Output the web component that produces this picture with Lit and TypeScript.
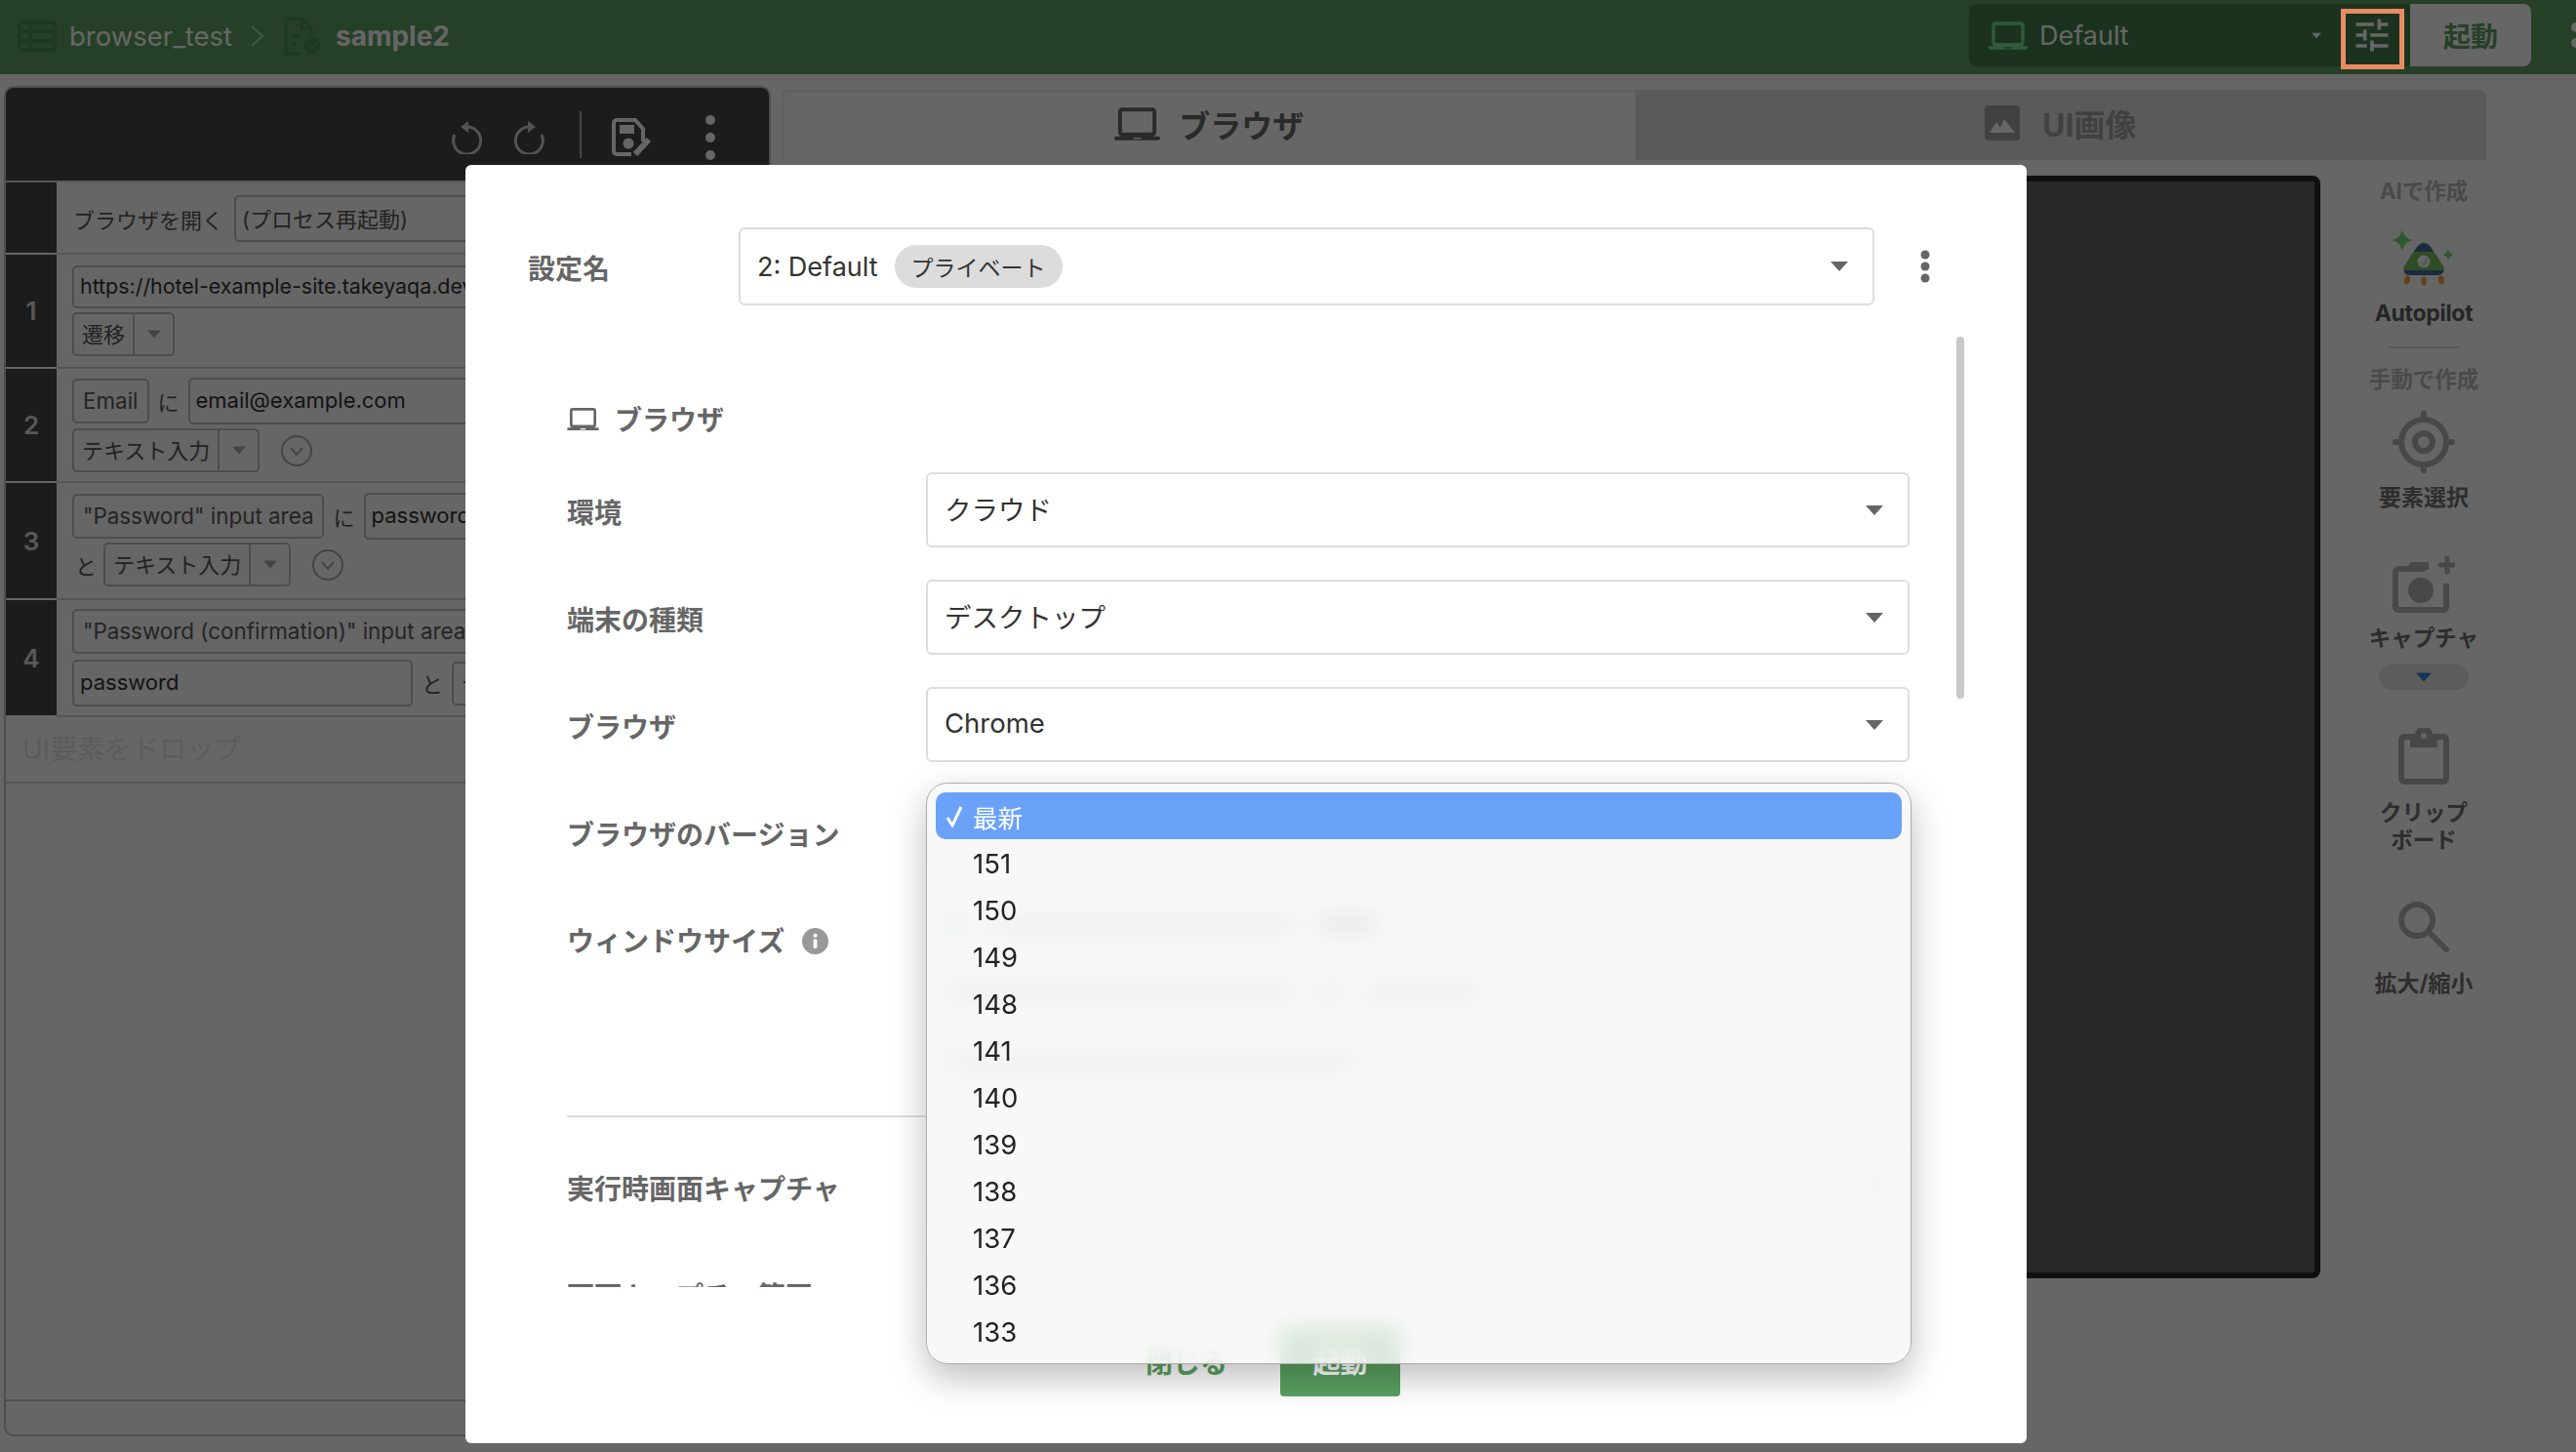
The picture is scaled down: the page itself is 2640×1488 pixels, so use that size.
import { LitElement, html, css, svg } from 'lit';
import { customElement } from 'lit/decorators.js';

const laptop = (cls: string) => html`<svg class=${cls} viewBox="0 3 24 17"><path fill-rule="evenodd" d="M4 3h16c1.1 0 2 .9 2 2v11c0 1.1-.9 2-2 2h3c.6 0 1 .4 1 1s-.4 1-1 1H1c-.6 0-1-.4-1-1s.4-1 1-1h3c-1.1 0-2-.9-2-2V5c0-1.1.9-2 2-2zm0 2v11h16V5H4zm6 13.6v.8h4v-.8h-4z"/></svg>`;

const caret = (cls: string) => html`<svg class=${cls} viewBox="0 0 18 10"><path d="M0 0h18L9 10z"/></svg>`;

const downCircle = html`<svg class="down-circle" viewBox="0 0 32 32"><circle cx="16" cy="16" r="15"/><path d="M10 13l6 7 6-7"/></svg>`;

const VERSIONS = ['151', '150', '149', '148', '141', '140', '139', '138', '137', '136', '133'];

@customElement('app-root')
export class AppRoot extends LitElement {
  static styles = css`
    :host {
      display: block;
      position: relative;
      width: 2640px;
      height: 1488px;
      overflow: hidden;
      background: #fff;
      color: #333;
      font-family: Inter, "Noto Sans CJK JP", sans-serif;
    }
    svg { display: block; flex: none; }

    /* top bar */
    .topbar {
      display: flex;
      height: 76px;
      background: #5fa062;
      overflow: hidden;
    }
    .crumbs {
      display: flex;
      align-items: center;
      flex: 1;
      padding: 0 0 2px 18px;
      color: #fff;
      font-size: 27.5px;
    }
    .crumb-icon { width: 40px; height: 32px; margin-right: 13px; }
    .chevron { width: 15px; height: 22px; margin: 0 20px 0 18px; }
    .file-icon { width: 39px; height: 40px; margin-right: 14px; }
    .crumbs b { font-size: 28px; font-weight: 700; }
    .env {
      display: flex;
      width: 452px;
      height: 64px;
      margin-top: 4px;
      background: #447f4b;
      border-radius: 8px 0 0 8px;
    }
    .env-select {
      display: flex;
      align-items: center;
      width: 381px;
      box-sizing: border-box;
      padding: 0 20px;
      color: #fff;
      font-size: 27px;
    }
    .env-laptop { width: 40px; height: 29px; fill: #80df91; margin-right: 12px; }
    .env-caret { width: 10px; height: 7px; fill: #fff; margin-left: auto; }
    .env-tune {
      display: flex;
      align-items: center;
      justify-content: center;
      flex: 1;
      padding-right: 8px;
    }
    .env-tune svg { width: 44px; height: 44px; fill: #fff; }
    .run {
      display: flex;
      align-items: center;
      justify-content: center;
      width: 124px;
      height: 64px;
      margin-top: 4px;
      border-radius: 0 8px 8px 0;
      background: #fff;
      color: #5fa062;
      font-size: 28px;
      font-weight: 700;
    }
    .bar-more { width: 6px; height: 76px; margin-left: 40px; fill: #fff; }

    /* page body */
    .main { display: flex; height: 1412px; }

    /* steps panel */
    .steps {
      display: flex;
      flex-direction: column;
      width: 786px;
      height: 1384px;
      margin: 12px 0 0 4px;
      box-sizing: border-box;
      border: 2px solid #c4c4c4;
      border-radius: 10px;
      overflow: hidden;
      font-size: 22px;
    }
    .steps-head {
      display: flex;
      flex: none;
      align-items: center;
      justify-content: flex-end;
      height: 95px;
      padding-right: 54px;
      background: #464646;
      border-bottom: 2px solid #ddd;
    }
    .hist { width: 34px; height: 36px; fill: none; stroke: #d0d0d0; stroke-width: 3; margin-top: 4px; }
    .hist path + path { fill: #d0d0d0; stroke: none; }
    .hist.redo { margin-left: 29px; }
    .head-sep { width: 2px; height: 48px; background: #aaa; margin: 0 31px 0 35px; }
    .save { width: 41px; height: 39px; margin-top: 6px; }
    .head-more { width: 12px; height: 48px; fill: #fff; margin: 6px 0 0 54px; }
    .step { display: grid; grid-template-columns: 52px 1fr; flex: none; }
    .num {
      display: flex;
      align-items: center;
      justify-content: center;
      background: #464646;
      border-bottom: 2px solid #fff;
      color: #ddd;
      font-size: 26px;
      font-weight: 600;
    }
    .body {
      display: flex;
      flex-direction: column;
      min-width: 0;
      padding-left: 16px;
      border-bottom: 2px solid #d4d4d4;
    }
    .s0 { height: 74px; }
    .s0 .body { padding-top: 13px; }
    .s1 { height: 117px; }
    .s1 .body { padding-top: 11px; gap: 4px; }
    .s2 { height: 117px; }
    .s2 .body { padding-top: 9px; gap: 4px; }
    .s3 { height: 120px; }
    .s3 .body { padding-top: 10px; gap: 3px; }
    .s4 { height: 120px; }
    .s4 .body { padding-top: 9px; gap: 6px; }
    .line { display: flex; align-items: center; white-space: nowrap; }
    .word { color: #555; margin: 0 9px; }
    .word.first { margin: 0 11px 0 1px; }
    .word.lead { margin: 0 7px 0 3px; }
    .chip {
      display: flex;
      align-items: center;
      flex: none;
      height: 46px;
      box-sizing: border-box;
      padding: 0 9px 2px;
      border: 2px solid #c0c0c0;
      border-radius: 5px;
      color: #5a5a5a;
      font-size: 22.4px;
    }
    .input {
      display: flex;
      align-items: center;
      flex: 1;
      min-width: 0;
      height: 48px;
      box-sizing: border-box;
      padding: 0 6px 2px;
      border: 2px solid #c0c0c0;
      border-radius: 5px;
      color: #333;
      overflow: hidden;
    }
    .input.muted { color: #555; }
    .input.fixed { flex: none; width: 349px; }
    .input.url { height: 44px; font-size: 21.4px; }
    .combo {
      display: flex;
      align-items: center;
      flex: none;
      height: 45px;
      box-sizing: border-box;
      border: 2px solid #c0c0c0;
      border-radius: 5px;
      color: #555;
    }
    .combo span { padding: 0 8px 3px; font-size: 22px; }
    .combo i {
      display: flex;
      align-items: center;
      justify-content: center;
      width: 39px;
      height: 100%;
      border-left: 2px solid #c0c0c0;
    }
    .combo-caret { width: 14px; height: 9px; fill: #aaa; }
    .down-circle { width: 32px; height: 32px; margin-left: 22px; fill: none; stroke: #aaa; stroke-width: 2; }
    .drop {
      flex: none;
      height: 68px;
      box-sizing: border-box;
      padding-left: 17px;
      border-bottom: 2px solid #d4d4d4;
      color: #e6e6e6;
      font-size: 28px;
      line-height: 66px;
    }
    .steps-space { flex: 1; border-bottom: 2px solid #c8c8c8; }
    .steps-foot { flex: none; height: 34px; }

    /* browser area */
    .stage { display: flex; flex-direction: column; width: 1747px; margin: 16px 0 0 11px; }
    .tabs { display: flex; height: 72px; flex: none; }
    .tab {
      display: flex;
      align-items: center;
      justify-content: center;
      flex: 1;
      gap: 19px;
      box-sizing: border-box;
      padding-bottom: 4px;
      font-size: 32px;
      font-weight: 700;
    }
    .tab.on { color: #6a6a6a; border-top: 2px solid #eee; border-left: 2px solid #eee; border-radius: 8px 0 0 0; }
    .tab.off { color: #a2a2a2; background: #e1e1e1; border-radius: 0 8px 0 0; gap: 23px; }
    .tab-laptop { width: 47px; height: 34px; fill: #6a6a6a; }
    .tab-image { width: 36px; height: 36px; }
    .work { display: flex; flex: 1; }
    .device {
      flex: 1;
      height: 1130px;
      margin: 16px 42px 0 60px;
      box-sizing: border-box;
      background: #666;
      border: 6px solid #2a2a2a;
      border-radius: 8px;
    }
    .tools {
      display: flex;
      flex-direction: column;
      align-items: center;
      width: 128px;
      padding-top: 16px;
      color: #707070;
      font-size: 23px;
      font-weight: 700;
      line-height: 32px;
      text-align: center;
      white-space: nowrap;
    }
    .tools .head { color: #b9b9b9; font-size: 22.5px; }
    .tools .auto { color: #5d5d5d; font-size: 23px; letter-spacing: -0.3px; margin-top: 12px; }
    .tools hr { width: 73px; height: 2px; margin: 18px 0 0; border: 0; background: #dcdcdc; }
    .mt16 { margin-top: 16px; }
    .rocket { width: 66px; height: 58px; margin-top: 23px; }
    .target { width: 64px; height: 64px; margin-top: 16px; fill: none; stroke: #b4b4b4; stroke-width: 6; }
    .lab-target { margin-top: 9px; }
    .camera { width: 64px; height: 58px; margin-top: 44px; }
    .lab-camera { margin-top: 10px; font-size: 22.5px; }
    .more-pill {
      display: flex;
      align-items: center;
      justify-content: center;
      width: 92px;
      height: 26px;
      margin-top: 11px;
      border-radius: 13px;
      background: #e6e6e6;
    }
    .pill-caret { width: 16px; height: 10px; fill: #2a82e0; }
    .clip { width: 52px; height: 58px; margin-top: 39px; }
    .lab-clip { margin-top: 15px; font-size: 22.5px; line-height: 28px; }
    .zoom { width: 52px; height: 52px; margin-top: 49px; fill: none; stroke: #b4b4b4; stroke-width: 6; stroke-linecap: round; }

    /* dimmer and modal */
    .dim {
      position: absolute;
      inset: 0;
      display: flex;
      align-items: flex-start;
      justify-content: center;
      box-sizing: border-box;
      padding: 169px 86px 0 0;
      background: rgba(0, 0, 0, 0.6);
    }
    .marker {
      position: absolute;
      left: 2399px;
      top: 9px;
      width: 65px;
      height: 62px;
      box-sizing: border-box;
      border: 5px solid #e98b63;
    }
    .modal {
      position: relative;
      display: flex;
      flex-direction: column;
      width: 1600px;
      height: 1310px;
      background: #fff;
      border-radius: 6px;
    }
    .modal-head { display: flex; align-items: center; flex: none; height: 80px; margin: 64px 0 32px; padding-left: 64px; }
    .m-label { color: #666; font-size: 28px; font-weight: 700; white-space: nowrap; }
    .modal-head .m-label { width: 216px; padding-top: 2px; }
    .field {
      display: flex;
      align-items: center;
      box-sizing: border-box;
      padding: 0 25px 0 17px;
      border: 2px solid #ddd;
      border-radius: 6px;
      background: #fff;
      color: #333;
      font-size: 27.5px;
    }
    .field > .val { padding-bottom: 4px; }
    .field-caret { width: 18px; height: 10px; fill: #666; margin-left: auto; flex: none; }
    .setting { width: 1164px; height: 80px; font-size: 27px; }
    .setting .val { padding: 0; }
    .tag {
      display: flex;
      align-items: center;
      height: 44px;
      margin-left: 17px;
      padding: 0 17px;
      border-radius: 22px;
      background: #dcdcdc;
      font-size: 23px;
    }
    .kebab { width: 10px; height: 34px; margin-left: 47px; fill: #666; }
    .scroll {
      position: relative;
      flex: 1;
      min-height: 0;
      padding: 64px 120px 0 104px;
      overflow: hidden;
    }
    .scroll-thumb {
      position: absolute;
      left: 1528px;
      top: 0;
      width: 8px;
      height: 371px;
      border-radius: 4px;
      background: #c8c8c8;
    }
    .sec { display: flex; align-items: center; height: 40px; gap: 16px; margin-bottom: 35px; }
    .sec-laptop { width: 33px; height: 23px; fill: #666; }
    .row { display: flex; align-items: center; height: 77px; margin-bottom: 33px; }
    .row .m-label { width: 368px; flex: none; padding-top: 2px; }
    .row .field { flex: 1; height: 77px; }
    .win { align-items: flex-start; height: 219px; margin: 0; }
    .win .m-label { display: flex; align-items: center; gap: 18px; padding-top: 19px; }
    .info { width: 27px; height: 27px; fill: #999; margin-top: 2px; }
    .ghosts { display: flex; flex-direction: column; flex: 1; gap: 40px; padding: 8px 0 0 20px; }
    .ghost { display: flex; align-items: center; gap: 20px; height: 30px; }
    .ghost i { display: block; height: 22px; border-radius: 4px; background: #d4d4d4; }
    .ghost .dot { width: 22px; border-radius: 50%; background: #a8d8ac; }
    .ghost .dark { background: #b0b0b0; }
    .divider { height: 2px; margin-bottom: 32px; background: #ddd; }
    .modal-foot {
      display: flex;
      flex: none;
      align-items: center;
      justify-content: center;
      gap: 54px;
      height: 72px;
      padding: 40px 0 48px 55px;
      font-size: 28px;
      font-weight: 700;
    }
    .close { color: #5aa161; }
    .start {
      display: flex;
      align-items: center;
      justify-content: center;
      width: 123px;
      height: 72px;
      border-radius: 4px;
      background: #5aa161;
      color: #fff;
    }

    /* native select popup */
    .popup {
      position: absolute;
      left: 472px;
      top: 633px;
      width: 1010px;
      height: 596px;
      box-sizing: border-box;
      padding: 9px;
      border: 1px solid #aeaeae;
      border-radius: 22px;
      background: rgba(246, 246, 246, 0.82);
      backdrop-filter: blur(11px);
      box-shadow: 0 14px 36px rgba(0, 0, 0, 0.26);
      color: #222;
      font-size: 27.5px;
    }
    .opt {
      display: flex;
      align-items: center;
      height: 48px;
      box-sizing: border-box;
      padding: 2px 0 0 38px;
      border-radius: 10px;
    }
    .opt.sel { position: relative; padding-top: 0; background: #6aa1f9; color: #fff; font-size: 25.5px; }
    .check {
      position: absolute;
      left: 10px;
      top: 13px;
      width: 18px;
      height: 23px;
      fill: none;
      stroke: #fff;
      stroke-width: 3;
    }
  `;

  render() {
    return html`
      <div class="topbar">
        <div class="crumbs">
          ${this.tableIcon()}
          <span>browser_test</span>
          <svg class="chevron" viewBox="0 0 15 22"><path d="M2 1l11 10L2 21" fill="none" stroke="#96e196" stroke-width="2"/></svg>
          ${this.fileIcon()}
          <b>sample2</b>
        </div>
        <div class="env">
          <div class="env-select">
            ${laptop('env-laptop')}
            <span>Default</span>
            ${caret('env-caret')}
          </div>
          <div class="env-tune">
            <svg viewBox="0 0 24 24"><path d="M3 17v2h6v-2H3zM3 5v2h10V5H3zm10 16v-2h8v-2h-8v-2h-2v6h2zM7 9v2H3v2h4v2h2V9H7zm14 4v-2H11v2h10zm-6-4h2V7h4V5h-4V3h-2v6z"/></svg>
          </div>
        </div>
        <div class="run">起動</div>
        <svg class="bar-more" viewBox="0 0 6 76"><circle cx="6" cy="28" r="5"/><circle cx="6" cy="44" r="5"/></svg>
      </div>

      <div class="main">
        ${this.renderSteps()}
        <div class="stage">
          <div class="tabs">
            <div class="tab on">${laptop('tab-laptop')}<span>ブラウザ</span></div>
            <div class="tab off">
              <svg class="tab-image" viewBox="0 0 36 36"><rect width="36" height="36" rx="4" fill="#a2a2a2"/><path d="M5 28l7-11 4 6 4-9 11 14z" fill="#fff"/></svg>
              <span>UI画像</span>
            </div>
          </div>
          <div class="work">
            <div class="device"></div>
            ${this.renderTools()}
          </div>
        </div>
      </div>

      <div class="dim">${this.renderModal()}</div>
      <div class="marker"></div>
    `;
  }

  renderSteps() {
    return html`
      <div class="steps">
        <div class="steps-head">
          <svg class="hist" viewBox="0 0 34 36"><path d="M16 8A14 14 0 1 1 4 16"/><path d="M10 8l8-6v12z"/></svg>
          <svg class="hist redo" viewBox="0 0 34 36"><path d="M18 8A14 14 0 1 0 30 16"/><path d="M24 8l-8-6v12z"/></svg>
          <div class="head-sep"></div>
          <svg class="save" viewBox="0 0 41 39">
            <path d="M5 2h19l8 9v13M20 37H5a3 3 0 0 1-3-3V5a3 3 0 0 1 3-3" fill="none" stroke="#fff" stroke-width="4"/>
            <rect x="8" y="7" width="15" height="9" fill="#fff"/>
            <circle cx="17" cy="26" r="5.5" fill="#fff"/>
            <path d="M24 37l14-15" stroke="#fff" stroke-width="6"/>
          </svg>
          <svg class="head-more" viewBox="0 0 12 48"><circle cx="6" cy="6" r="5"/><circle cx="6" cy="24" r="5"/><circle cx="6" cy="42" r="5"/></svg>
        </div>

        <div class="step s0">
          <div class="num"></div>
          <div class="body">
            <div class="line"><span class="word first">ブラウザを開く</span><div class="input muted">(プロセス再起動)</div></div>
          </div>
        </div>
        <div class="step s1">
          <div class="num">1</div>
          <div class="body">
            <div class="line"><div class="input url">https://hotel-example-site.takeyaqa.dev/ja/signup.html</div></div>
            <div class="line">${this.combo('遷移')}</div>
          </div>
        </div>
        <div class="step s2">
          <div class="num">2</div>
          <div class="body">
            <div class="line"><div class="chip">Email</div><span class="word">に</span><div class="input">email@example.com</div></div>
            <div class="line">${this.combo('テキスト入力')}${downCircle}</div>
          </div>
        </div>
        <div class="step s3">
          <div class="num">3</div>
          <div class="body">
            <div class="line"><div class="chip">"Password" input area</div><span class="word">に</span><div class="input">password</div></div>
            <div class="line"><span class="word lead">と</span>${this.combo('テキスト入力')}${downCircle}</div>
          </div>
        </div>
        <div class="step s4">
          <div class="num">4</div>
          <div class="body">
            <div class="line"><div class="chip">"Password (confirmation)" input area</div></div>
            <div class="line"><div class="input fixed">password</div><span class="word">と</span>${this.combo('テキスト入力')}</div>
          </div>
        </div>
        <div class="drop">UI要素をドロップ</div>
        <div class="steps-space"></div>
        <div class="steps-foot"></div>
      </div>
    `;
  }

  combo(label: string) {
    return html`<div class="combo"><span>${label}</span><i>${caret('combo-caret')}</i></div>`;
  }

  renderTools() {
    return html`
      <div class="tools">
        <div class="head">AIで作成</div>
        ${this.rocketIcon()}
        <div class="auto">Autopilot</div>
        <hr />
        <div class="head mt16">手動で作成</div>
        <svg class="target" viewBox="0 0 64 64">
          <circle cx="32" cy="32" r="23"/><circle cx="32" cy="32" r="9"/>
          <path d="M32 3v6M32 55v6M3 32h6M55 32h6" stroke-linecap="round"/>
        </svg>
        <div class="lab-target">要素選択</div>
        <svg class="camera" viewBox="0 0 64 58">
          <path d="M33 13H6a3 3 0 0 0-3 3v36a3 3 0 0 0 3 3h46a3 3 0 0 0 3-3V28" fill="none" stroke="#b4b4b4" stroke-width="6"/>
          <path d="M14 14l3-6a3 3 0 0 1 3-2h17v8z" fill="#b4b4b4"/>
          <circle cx="29" cy="35" r="13" fill="#b4b4b4"/>
          <path d="M56 2v14M49 9h14" stroke="#b4b4b4" stroke-width="5" stroke-linecap="round"/>
        </svg>
        <div class="lab-camera">キャプチャ</div>
        <div class="more-pill">${caret('pill-caret')}</div>
        <svg class="clip" viewBox="0 0 52 58">
          <rect x="3" y="9" width="46" height="46" rx="3" fill="none" stroke="#b4b4b4" stroke-width="6"/>
          <path d="M12 7h5a9 9 0 0 1 18 0h5v13H12z" fill="#b4b4b4"/>
          <circle cx="26" cy="8" r="3" fill="#fff"/>
        </svg>
        <div class="lab-clip">クリップ<br />ボード</div>
        <svg class="zoom" viewBox="0 0 52 52"><circle cx="19" cy="19" r="16"/><path d="M31 31l18 18"/></svg>
        <div class="mt16">拡大/縮小</div>
      </div>
    `;
  }

  renderModal() {
    return html`
      <div class="modal">
        <div class="modal-head">
          <div class="m-label">設定名</div>
          <div class="field setting">
            <span class="val">2: Default</span>
            <span class="tag">プライベート</span>
            ${caret('field-caret')}
          </div>
          <svg class="kebab" viewBox="0 0 10 34"><ellipse cx="5" cy="5" rx="4.5" ry="4.5"/><ellipse cx="5" cy="17" rx="4.5" ry="4.5"/><ellipse cx="5" cy="29" rx="4.5" ry="4.5"/></svg>
        </div>

        <div class="scroll">
          <div class="scroll-thumb"></div>
          <div class="sec m-label">${laptop('sec-laptop')}<span>ブラウザ</span></div>
          ${this.selectRow('環境', 'クラウド')}
          ${this.selectRow('端末の種類', 'デスクトップ')}
          ${this.selectRow('ブラウザ', 'Chrome')}
          ${this.selectRow('ブラウザのバージョン', '')}
          <div class="row win">
            <div class="m-label">
              <span>ウィンドウサイズ</span>
              <svg class="info" viewBox="0 0 26 26"><circle cx="13" cy="13" r="13"/><circle cx="13" cy="7.5" r="2" fill="#fff"/><rect x="11.2" y="11" width="3.6" height="9" rx="1" fill="#fff"/></svg>
            </div>
            <div class="ghosts">
              <div class="ghost"><i class="dot"></i><i style="width:320px"></i><i class="dark" style="width:60px"></i></div>
              <div class="ghost"><i style="width:360px"></i><i style="width:30px"></i><i style="width:120px"></i></div>
              <div class="ghost"><i style="width:420px"></i></div>
            </div>
          </div>
          <div class="divider"></div>
          ${this.selectRow('実行時画面キャプチャ', '')}
          ${this.selectRow('画面キャプチャ範囲', '')}
        </div>

        <div class="modal-foot">
          <span class="close">閉じる</span>
          <div class="start">起動</div>
        </div>

        <div class="popup">
          <div class="opt sel">
            <svg class="check" viewBox="0 0 18 23"><path d="M2 13l5 8L16 2"/></svg>
            最新
          </div>
          ${VERSIONS.map((v) => html`<div class="opt">${v}</div>`)}
        </div>
      </div>
    `;
  }

  selectRow(label: string, value: string) {
    return html`
      <div class="row">
        <div class="m-label">${label}</div>
        <div class="field"><span class="val">${value}</span>${caret('field-caret')}</div>
      </div>
    `;
  }

  tableIcon() {
    return html`<svg class="crumb-icon" viewBox="0 0 40 32" fill="none" stroke="#469150" stroke-width="4">
      <rect x="2" y="2" width="36" height="28" rx="3"/>
      <path d="M2 11h36M2 21h36M13 2v28"/>
    </svg>`;
  }

  fileIcon() {
    return html`<svg class="file-icon" viewBox="0 0 39 40" fill="none" stroke="#469150" stroke-width="3">
      <path d="M18 38H3a2 2 0 0 1-1-2V4a2 2 0 0 1 2-2h14l10 10v8"/>
      <path d="M18 2v10h10M8 20h8M8 27h5"/>
      <circle cx="29" cy="30" r="8.5" fill="#469150" stroke="none"/>
      <path d="M25 30l3 3 5-6" stroke="#5fa062" stroke-width="2"/>
    </svg>`;
  }

  rocketIcon() {
    return html`<svg class="rocket" viewBox="21 10 66 58">
      ${svg`
        <path d="M32 10c1 6 5 10 11 11-6 1-10 5-11 12-1-7-5-11-11-12 6-1 10-5 11-11z" fill="#69e178"/>
        <path d="M79 30c.5 3 2.5 5 5.5 6-3 1-5 3-5.500 6-.5-3-2.500-5-5.500-6 3-1 5-3 5.500-6z" fill="#69e178"/>
        <path d="M47 28c4-6 10-6 14 0l12 18c4 6 1 11-5 11H40c-6 0-9-5-5-11z" fill="#75c05c"/>
        <path d="M46 30c4-7 12-7 16 0l2 3H44z" fill="#416b9d"/>
        <path d="M34 52h40c0 3-3 5-6 5H40c-3 0-6-2-6-5z" fill="#416b9d"/>
        <circle cx="54" cy="43" r="6.500" fill="#fff"/>
        <path d="M57 38l-6 10a6.500 6.500 0 0 0 6-10z" fill="#bfeee0"/>
        <ellipse cx="37" cy="62" rx="3" ry="4.500" fill="#ffa040" transform="rotate(12 37 62)"/>
        <ellipse cx="54" cy="63" rx="2.800" ry="4.500" fill="#ffa040"/>
        <ellipse cx="72" cy="62" rx="3" ry="4.500" fill="#ffa040" transform="rotate(-12 72 62)"/>
      `}
    </svg>`;
  }
}
